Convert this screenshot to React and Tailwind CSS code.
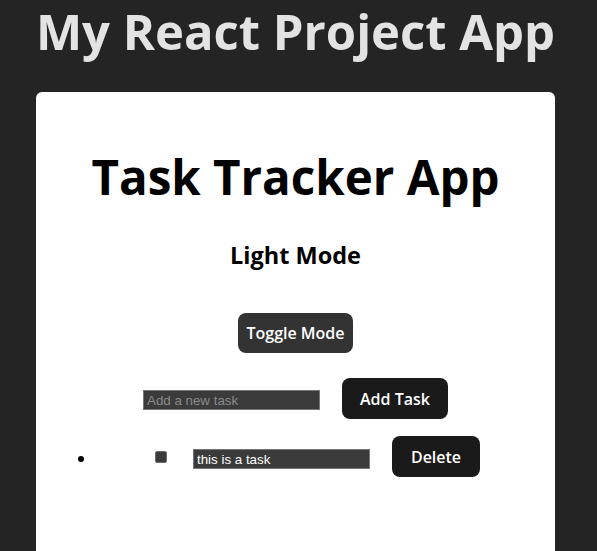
import React from "react";

export default function App() {
  return (
    <div
      className="min-h-screen bg-[#242424] flex flex-col items-center pr-[6px]"
      style={{ fontFamily: '"Open Sans", "Noto Sans", sans-serif' }}
    >
      <h1 className="pt-[3px] text-[49px] leading-[56px] font-bold text-[#e3e3e3] mb-[33px] h-[59px] whitespace-nowrap">
        My React Project App
      </h1>
      <div className="w-[519px] bg-white rounded-[6px] px-[20px] pt-[57px] pb-[100px] text-black">
        <h1 className="text-[47.5px] leading-[56px] font-bold text-center h-[56px] whitespace-nowrap">
          Task Tracker App
        </h1>
        <h2 className="mt-[32px] text-[23.5px] leading-[36px] font-bold text-center">
          Light Mode
        </h2>
        <div className="mt-[40px] flex justify-center">
          <button className="w-[115px] h-[40px] rounded-[8px] bg-[#333333] text-white text-[16px] font-semibold">
            Toggle Mode
          </button>
        </div>
        <div className="mt-[25px] flex justify-center items-start gap-[22px]">
          <input
            type="text"
            placeholder="Add a new task"
            className="mt-[12px] w-[177px] h-[20px] bg-[#3b3b3b] border border-[#767676] px-[3px] text-[13.33px] text-white placeholder:text-[#8a8a8a] outline-none"
            style={{ fontFamily: '"Liberation Sans", Arial, sans-serif' }}
          />
          <button className="w-[106px] h-[41px] rounded-[8px] bg-[#1a1a1a] text-white text-[16px] font-semibold">
            Add Task
          </button>
        </div>
        <div className="mt-[17px] flex items-start">
          <span className="ml-[22px] mt-[20px] w-[6px] h-[6px] rounded-full bg-black" />
          <span className="ml-[71px] mt-[15px] w-[12px] h-[12px] rounded-[2px] bg-[#3b3b3b] border border-[#6b6b6b]" />
          <input
            type="text"
            defaultValue="this is a task"
            className="ml-[26px] mt-[13px] w-[177px] h-[20px] bg-[#3b3b3b] border border-[#767676] px-[3px] text-[13.33px] text-white outline-none"
            style={{ fontFamily: '"Liberation Sans", Arial, sans-serif' }}
          />
          <button className="ml-[22px] w-[88px] h-[41px] rounded-[8px] bg-[#1a1a1a] text-white text-[16px] font-semibold">
            Delete
          </button>
        </div>
      </div>
    </div>
  );
}
